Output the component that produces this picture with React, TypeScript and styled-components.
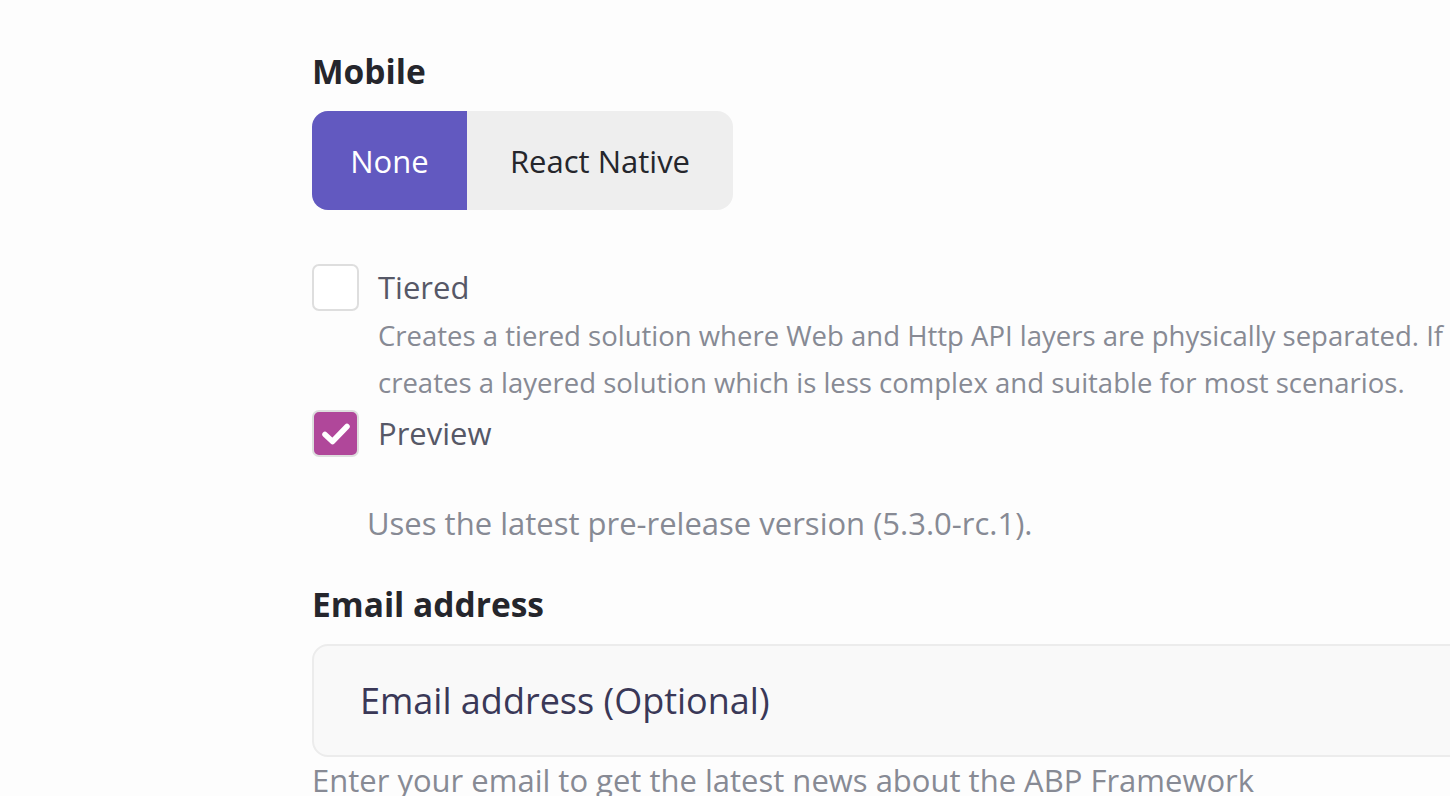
import React, { useState } from "react";
import styled, { createGlobalStyle } from "styled-components";

const GlobalStyle = createGlobalStyle`
  html, body {
    margin: 0;
    padding: 0;
    background: #fdfdfd;
    overflow: hidden;
  }
  body {
    font-family: "Open Sans", "Noto Sans", sans-serif;
  }
`;

const Page = styled.div`
  width: 1450px;
  height: 796px;
  overflow: hidden;
  padding: 48px 0 0 312px;
  box-sizing: border-box;
`;

const Column = styled.div`
  width: 1300px;
  display: flex;
  flex-direction: column;
`;

const SectionTitle = styled.h3<{ $top?: number }>`
  margin: ${(p) => p.$top || 0}px 0 0 0;
  font-size: 33.5px;
  font-weight: 700;
  color: #25262c;
  line-height: 46px;
`;

const Toggle = styled.div`
  margin-top: 17px;
  display: flex;
  width: 421px;
  height: 99px;
  border-radius: 16px;
  overflow: hidden;
  background: #eeeeee;
`;

const ToggleOption = styled.button<{ $active?: boolean; $width: number }>`
  width: ${(p) => p.$width}px;
  border: none;
  padding: 0;
  font-family: inherit;
  font-size: 31px;
  background: ${(p) => (p.$active ? "#6259c0" : "transparent")};
  color: ${(p) => (p.$active ? "#ffffff" : "#25262c")};
  cursor: pointer;
`;

const CheckRow = styled.label<{ $top: number }>`
  margin-top: ${(p) => p.$top}px;
  display: flex;
  align-items: center;
  gap: 19px;
  cursor: pointer;
`;

const Box = styled.span<{ $checked?: boolean }>`
  width: 47px;
  height: 47px;
  box-sizing: border-box;
  border-radius: 7px;
  border: 2px solid #dedede;
  background: ${(p) => (p.$checked ? "#b0479a" : "#ffffff")};
  display: flex;
  align-items: center;
  justify-content: center;
  flex-shrink: 0;
`;

const CheckLabel = styled.span`
  font-size: 31px;
  color: #565867;
  line-height: 47px;
`;

const Hint = styled.p<{ $indent: number; $top?: number; $size?: number }>`
  margin: ${(p) => p.$top || 0}px 0 0 ${(p) => p.$indent}px;
  font-size: ${(p) => p.$size || 27.5}px;
  line-height: 47px;
  color: #878a94;
  white-space: nowrap;
`;

const Input = styled.input`
  margin-top: 17px;
  width: 1250px;
  height: 113px;
  box-sizing: border-box;
  border: 2px solid #ececec;
  border-radius: 16px;
  background: #f9f9f9;
  padding: 0 0 0 46px;
  font-family: inherit;
  font-size: 36px;
  color: #3a3857;
  outline: none;
  &::placeholder {
    color: #3a3857;
  }
`;

const Check = () => (
  <svg width="30" height="24" viewBox="0 0 30 24">
    <path d="M4 12.5 L11.5 19.5 L26 4.5" fill="none" stroke="#fff" strokeWidth="5.5" strokeLinecap="round" strokeLinejoin="round" />
  </svg>
);

export default function App() {
  const [mobile, setMobile] = useState("none");
  const [tiered, setTiered] = useState(false);
  const [preview, setPreview] = useState(true);

  return (
    <>
      <GlobalStyle />
      <Page>
        <Column>
          <SectionTitle>Mobile</SectionTitle>
          <Toggle>
            <ToggleOption $width={155} $active={mobile === "none"} onClick={() => setMobile("none")}>
              None
            </ToggleOption>
            <ToggleOption $width={266} $active={mobile === "rn"} onClick={() => setMobile("rn")}>
              React Native
            </ToggleOption>
          </Toggle>

          <CheckRow $top={54} onClick={() => setTiered(!tiered)}>
            <Box $checked={tiered}>{tiered && <Check />}</Box>
            <CheckLabel>Tiered</CheckLabel>
          </CheckRow>
          <Hint $indent={66} $top={1}>
            Creates a tiered solution where Web and Http API layers are physically separated. If not checked,
            <br />
            creates a layered solution which is less complex and suitable for most scenarios.
          </Hint>

          <CheckRow $top={4} onClick={() => setPreview(!preview)}>
            <Box $checked={preview}>{preview && <Check />}</Box>
            <CheckLabel>Preview</CheckLabel>
          </CheckRow>
          <Hint $indent={55} $top={43} $size={31}>
            Uses the latest pre-release version (5.3.0-rc.1).
          </Hint>

          <SectionTitle $top={34}>Email address</SectionTitle>
          <Input placeholder="Email address (Optional)" />
          <Hint $indent={0} $top={0} $size={31}>
            Enter your email to get the latest news about the ABP Framework
          </Hint>
        </Column>
      </Page>
    </>
  );
}
